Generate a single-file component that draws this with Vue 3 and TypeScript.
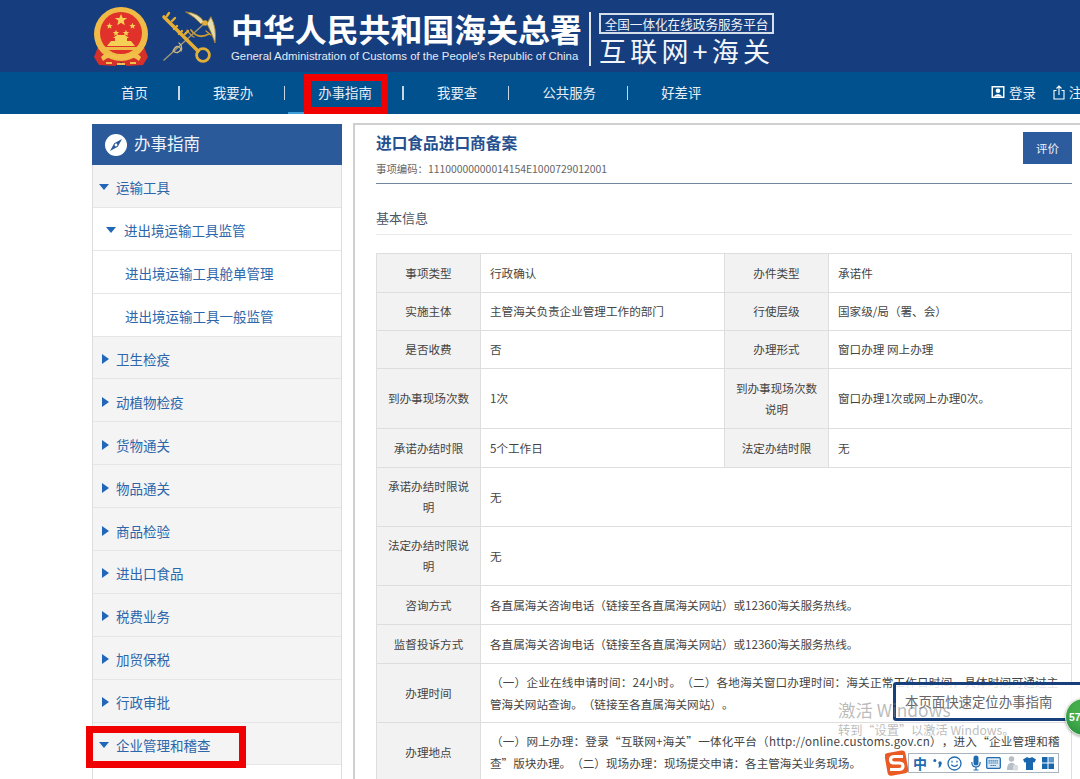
<script setup lang="ts">
interface NavItem { label: string; active?: boolean }
interface SideItem { label: string; level: number; open?: boolean; arrow?: boolean; marked?: boolean }

const navItems: NavItem[] = [
  { label: '首页' },
  { label: '我要办' },
  { label: '办事指南', active: true },
  { label: '我要查' },
  { label: '公共服务' },
  { label: '好差评' }
]

const sideItems: SideItem[] = [
  { label: '运输工具', level: 0, open: true, arrow: true },
  { label: '进出境运输工具监管', level: 1, open: true, arrow: true },
  { label: '进出境运输工具舱单管理', level: 2 },
  { label: '进出境运输工具一般监管', level: 2 },
  { label: '卫生检疫', level: 0, arrow: true },
  { label: '动植物检疫', level: 0, arrow: true },
  { label: '货物通关', level: 0, arrow: true },
  { label: '物品通关', level: 0, arrow: true },
  { label: '商品检验', level: 0, arrow: true },
  { label: '进出口食品', level: 0, arrow: true },
  { label: '税费业务', level: 0, arrow: true },
  { label: '加贸保税', level: 0, arrow: true },
  { label: '行政审批', level: 0, arrow: true },
  { label: '企业管理和稽查', level: 0, open: true, arrow: true, marked: true }
]

const phone = '各直属海关咨询电话（链接至各直属海关网站）或12360海关服务热线。'
const star = 'M0 -3.200 L0.900 -1 L3.200 -1 L1.400 0.400 L2 2.700 L0 1.400 L-2 2.700 L-1.400 0.400 L-3.200 -1 L-0.900 -1 Z'
</script>

<template>
  <div class="page">
    <header class="masthead">
      <svg class="emblem" viewBox="0 0 56 60" width="56" height="60">
        <path d="M5 40 L1 50 L6 58 L22 59 L28 55 L34 59 L50 58 L55 50 L51 40 Z" fill="#d5302a" />
        <circle cx="28" cy="27" r="27" fill="#efba45" />
        <circle cx="28" cy="26" r="21" fill="#e0322a" />
        <path d="M8 50 Q14 43 22 48 Q26 50 28 47 Q30 50 34 48 Q42 43 48 50 L46 54 Q40 48 34 52 Q30 54 28 52 Q26 54 22 52 Q16 48 10 54 Z" fill="#f2c04a" />
        <path d="M24 56 H32 V58 H24 Z M13 55 H19 V57 H13 Z M37 55 H43 V57 H37 Z" fill="#f2c04a" />
        <g fill="#f6cf55">
          <path :d="star" transform="translate(28 13) scale(1.900)" />
          <path :d="star" transform="translate(16.500 19)" />
          <path :d="star" transform="translate(39.500 19)" />
          <path :d="star" transform="translate(23 26)" />
          <path :d="star" transform="translate(33 26)" />
        </g>
        <path d="M14 39 L18 34 H22 V31 L20 31 L24 28 H32 L36 31 L34 31 V34 H38 L42 39 Z" fill="#f6cf55" />
        <path d="M9 40 H47 V43 H9 Z" fill="#efba45" />
      </svg>
      <svg class="customs" viewBox="0 0 56 56" width="56" height="56">
        <g fill="none" stroke-linecap="round">
          <path d="M3 50 L44 13" stroke="#9a9678" stroke-width="1.500" />
          <path d="M30 20 Q37 30 48 24" stroke="#c99a33" stroke-width="1.800" />
          <path d="M26 20 Q30 26 33 27 M45 21 L50 25" stroke="#c99a33" stroke-width="1.300" />
          <path d="M25 2 Q38 3 43 12 L40 14 Q34 7 25 2 Z" fill="#e6dcae" stroke="#a8842c" stroke-width="0.900" />
          <path d="M50 7 Q56 18 54 33 Q50 21 46 14 Z" fill="#e6dcae" stroke="#a8842c" stroke-width="0.900" />
          <path d="M3 7 L37 41" stroke="#e2ae37" stroke-width="3.600" />
          <path d="M6 6 L8 3 M11 11 L14 8 M16 16 L13 19 M21 21 L18 24 M24 24 L27 21" stroke="#e2ae37" stroke-width="2.400" />
          <circle cx="42" cy="45" r="6.400" stroke="#e2ae37" stroke-width="2.800" />
          <circle cx="44" cy="13" r="2.700" fill="#e2ae37" />
          <path d="M12 41 Q16 33 20 39 Q17 45 12 41 Z M18 33 Q22 36 20 41" stroke="#cdb67e" stroke-width="1.300" />
        </g>
      </svg>
      <div class="brand">
        <div class="brand-cn">中华人民共和国海关总署</div>
        <div class="brand-en">General Administration of Customs of the People's Republic of China</div>
      </div>
      <span class="brand-rule"></span>
      <div class="platform">
        <div class="platform-tag">全国一体化在线政务服务平台</div>
        <div class="platform-name">互联网+海关</div>
      </div>
    </header>

    <nav class="nav">
      <template v-for="(item, i) in navItems" :key="item.label">
        <span v-if="i > 0" class="nav-sep"></span>
        <a class="nav-item" :class="{ active: item.active }">
          {{ item.label }}
          <i v-if="item.active" class="nav-under"></i>
          <i v-if="item.active" class="nav-mark"></i>
        </a>
      </template>
      <div class="nav-user">
        <svg width="14" height="14" viewBox="0 0 14 14">
          <rect x="0.500" y="1" width="13" height="12" fill="#fff" />
          <rect x="2" y="2.500" width="10" height="9" fill="#01518f" />
          <circle cx="7" cy="5.800" r="2.300" fill="#fff" />
          <path d="M2.500 11.500 Q7 6.500 11.500 11.500 Z" fill="#fff" />
        </svg>
        <span class="user-login">登录</span>
        <svg width="12" height="15" viewBox="0 0 12 15" fill="none" stroke="#fff" stroke-width="1.100">
          <path d="M3.500 5.500 H1 V14 H11 V5.500 H8.500" />
          <path d="M6 10 V1 M3.500 3.500 L6 1 L8.500 3.500" />
        </svg>
        <span class="user-reg">注册</span>
      </div>
    </nav>

    <main class="body">
      <aside class="side">
        <div class="side-head">
          <svg width="22" height="22" viewBox="0 0 22 22">
            <circle cx="11" cy="11" r="11" fill="#fff" />
            <path d="M17 5 L12.800 12.800 L5 17 L9.200 9.200 Z" fill="#2b5a9a" />
            <circle cx="11" cy="11" r="1.400" fill="#fff" />
          </svg>
          <span>办事指南</span>
        </div>
        <div
          v-for="item in sideItems"
          :key="item.label"
          class="side-row"
          :class="['lv' + item.level, { marked: item.marked }]"
        >
          <i v-if="item.arrow" :class="item.open ? 'arrow-down' : 'arrow-right'"></i>
          <span>{{ item.label }}</span>
        </div>
      </aside>

      <section class="panel">
        <div class="panel-head">
          <div>
            <h1 class="title">进口食品进口商备案</h1>
            <p class="code">事项编码：11100000000014154E1000729012001</p>
          </div>
          <button class="rate">评价</button>
        </div>
        <h2 class="section">基本信息</h2>

        <table class="info">
          <colgroup>
            <col class="c1" />
            <col class="c2" />
            <col class="c3" />
            <col class="c4" />
          </colgroup>
          <tbody>
            <tr class="h39"><th>事项类型</th><td>行政确认</td><th>办件类型</th><td>承诺件</td></tr>
            <tr class="h38"><th>实施主体</th><td>主管海关负责企业管理工作的部门</td><th>行使层级</th><td>国家级/局（署、会）</td></tr>
            <tr class="h38"><th>是否收费</th><td>否</td><th>办理形式</th><td>窗口办理 网上办理</td></tr>
            <tr class="h60"><th>到办事现场次数</th><td>1次</td><th>到办事现场次数说明</th><td>窗口办理1次或网上办理0次。</td></tr>
            <tr class="h39"><th>承诺办结时限</th><td>5个工作日</td><th>法定办结时限</th><td>无</td></tr>
            <tr class="h59"><th>承诺办结时限说明</th><td colspan="3">无</td></tr>
            <tr class="h59"><th>法定办结时限说明</th><td colspan="3">无</td></tr>
            <tr class="h39"><th>咨询方式</th><td colspan="3">{{ phone }}</td></tr>
            <tr class="h39"><th>监督投诉方式</th><td colspan="3">{{ phone }}</td></tr>
            <tr class="h59">
              <th>办理时间</th>
              <td colspan="3" class="para">
                <span class="indent">（一）企业在线申请时间：24小时。（二）各地海关窗口办理时间：海关正常工作日时间，具体时间可通过主</span><br />管海关网站查询。（链接至各直属海关网站）。
              </td>
            </tr>
            <tr class="h59">
              <th>办理地点</th>
              <td colspan="3" class="para">
                <span class="indent">（一）网上办理：登录“互联网+海关”一体化平台（http://online.customs.gov.cn），进入“企业管理和稽</span><br />查”版块办理。（二）现场办理：现场提交申请：各主管海关业务现场。
              </td>
            </tr>
          </tbody>
        </table>
      </section>
    </main>

    <div class="locator">本页面快速定位办事指南</div>
    <div class="watermark">
      <div class="wm-1">激活 Windows</div>
      <div class="wm-2">转到“设置”以激活 Windows。</div>
    </div>
    <div class="ball">57</div>

    <div class="ime">
      <svg class="ime-s" width="24" height="26" viewBox="0 0 24 26">
        <rect x="1" y="1.500" width="21" height="23" rx="3.500" fill="#ea5a24" transform="rotate(-10 12 13)" />
        <path d="M18 6.500 H9.500 Q5.500 6.500 5.500 10 Q5.500 13 9.500 13 H14 Q18 13 18 16 Q18 19.500 14 19.500 H5" fill="none" stroke="#fff" stroke-width="3.200" />
      </svg>
      <div class="ime-bar">
        <span class="ime-zh">中</span>
        <svg width="9" height="11" viewBox="0 0 9 11" fill="#1f6bb0">
          <circle cx="1.800" cy="2.500" r="1.500" />
          <circle cx="7" cy="5" r="1.700" />
          <path d="M5.500 10 Q8.500 9 8.600 5 L6 6 Z" />
        </svg>
        <svg width="15" height="15" viewBox="0 0 15 15" fill="none" stroke="#1f6bb0" stroke-width="1.300">
          <circle cx="7.500" cy="7.500" r="6.500" />
          <path d="M4.200 8.800 Q7.500 12 10.800 8.800" />
          <path d="M5 4.800 V6.500 M10 4.800 V6.500" />
        </svg>
        <svg class="ime-mic" width="10" height="16" viewBox="0 0 10 16">
          <rect x="2.500" y="0.500" width="5" height="10" rx="2.500" fill="#1f6bb0" />
          <path d="M0.800 7 Q0.800 12 5 12 Q9.200 12 9.200 7 M5 12 V15 M2.500 15 H7.500" fill="none" stroke="#1f6bb0" stroke-width="1.200" />
        </svg>
        <svg width="15" height="12" viewBox="0 0 15 12">
          <rect x="0.700" y="0.700" width="13.600" height="10.600" rx="1" fill="#dbe8f4" stroke="#1f6bb0" stroke-width="1.300" />
          <path d="M2.500 3.800 H12.500 M2.500 6 H12.500 M4.500 8.500 H10.500" stroke="#1f6bb0" stroke-width="1.200" stroke-dasharray="1.300 .7" />
        </svg>
        <svg width="11" height="15" viewBox="0 0 11 15" fill="#b6bfc8">
          <circle cx="4.500" cy="3" r="2.800" />
          <path d="M0 14 Q0 6.800 4.500 6.800 Q9 6.800 9 14 Z" />
          <rect x="6" y="9" width="5" height="5.500" rx="1" fill="#d8dde2" />
        </svg>
        <svg width="13" height="13" viewBox="0 0 13 13" fill="#1867ad">
          <path d="M4 0 Q6.500 2 9 0 L13 2.500 L11.300 5.800 L10 5 V13 H3 V5 L1.700 5.800 L0 2.500 Z" />
        </svg>
        <svg width="12" height="12" viewBox="0 0 12 12" fill="#1867ad">
          <rect width="5.500" height="5.500" />
          <rect x="6.500" width="5.500" height="5.500" fill="#5d97c9" />
          <rect y="6.500" width="5.500" height="5.500" />
          <rect x="6.500" y="6.500" width="5.500" height="5.500" />
        </svg>
      </div>
    </div>
  </div>
</template>

<style>
html, body { margin: 0; overflow: hidden; background: #fff; }
</style>

<style scoped>
.page {
  position: relative;
  width: 1080px;
  height: 779px;
  overflow: hidden;
  background: #fff;
  font-family: "Noto Sans CJK SC", "Liberation Sans", sans-serif;
  color: #444;
}
.masthead {
  display: flex;
  align-items: flex-start;
  height: 72px;
  padding-left: 93px;
  box-sizing: border-box;
  background: #163d7e;
}
.emblem { margin: 7px 0 0 0; flex: none; }
.customs { margin: 10px 0 0 12px; flex: none; }
.brand { margin: 8px 0 0 14px; width: 356px; flex: none; }
.brand-cn {
  font-size: 31.900px;
  line-height: 40px;
  font-weight: 700;
  color: #fff;
  white-space: nowrap;
}
.brand-en {
  font-family: "Liberation Sans", sans-serif;
  margin-top: 2px;
  font-size: 11.400px;
  line-height: 13px;
  color: #e5ebf4;
  white-space: nowrap;
}
.brand-rule { width: 2px; height: 54px; margin: 12px 0 0 2px; background: #dfe6f0; flex: none; }
.platform { margin: 13px 0 0 8px; flex: none; }
.platform-tag {
  box-sizing: border-box;
  width: 175px;
  height: 21px;
  border: 2px solid #d5deeb;
  font-size: 12.600px;
  line-height: 17px;
  text-align: center;
  color: #eef2f8;
  white-space: nowrap;
}
.platform-name {
  margin-top: 2px;
  font-size: 27px;
  line-height: 30px;
  font-weight: 400;
  letter-spacing: 4.200px;
  color: #f2f5fa;
  white-space: nowrap;
}

.nav {
  display: flex;
  align-items: center;
  height: 42px;
  padding-left: 121px;
  background: #01518f;
  color: #e8eef5;
  font-size: 13.400px;
  position: relative;
}
.nav-sep { width: 1.500px; height: 14px; margin: 0 33.200px 0 30.500px; background: #c6d6e5; flex: none; }
.nav-item { position: relative; line-height: 40px; padding-bottom: 2px; white-space: nowrap; }
.nav-under {
  position: absolute;
  left: -30px;
  right: -16px;
  bottom: 0;
  height: 2px;
  background: #3f9fd8;
}
.nav-mark {
  position: absolute;
  left: -14px;
  right: -16px;
  top: 2px;
  bottom: 0;
  border: 7px solid #f00000;
}
.nav-user {
  position: absolute;
  left: 991px;
  top: 0;
  height: 40px;
  display: flex;
  align-items: center;
  white-space: nowrap;
}
.user-login { margin: 0 17px 0 4px; }
.user-reg { margin-left: 4px; }

.body {
  display: flex;
  align-items: flex-start;
  gap: 11px;
  padding: 10px 0 0 92px;
}
.side {
  position: relative;
  flex: none;
  width: 250px;
  height: 660px;
  box-sizing: border-box;
  border-left: 1px solid #ddd;
  border-right: 1px solid #ddd;
}
.side-head {
  display: flex;
  align-items: center;
  gap: 7px;
  height: 41px;
  box-sizing: border-box;
  margin: 0 -1px;
  padding: 0 0 0 13px;
  background: #2b5a9a;
  color: #eef3f9;
  font-size: 16.500px;
  line-height: 20px;
}
.side-head span { padding-bottom: 4px; }
.side-row {
  position: relative;
  display: flex;
  align-items: center;
  box-sizing: border-box;
  height: 42.900px;
  padding-top: 3px;
  border-bottom: 1px solid #e6e6e6;
  font-size: 13.500px;
  color: #2d66aa;
  white-space: nowrap;
}
.lv0 { background: #f4f4f4; padding-left: 6px; }
.lv1 { background: #fff; padding-left: 13px; }
.lv2 { background: #fff; padding-left: 32px; }
.arrow-down {
  width: 0;
  height: 0;
  border-left: 5.500px solid transparent;
  border-right: 5.500px solid transparent;
  border-top: 6px solid #2166b8;
}
.lv0 .arrow-down { margin-right: 7px; }
.lv1 .arrow-down { margin-right: 8px; }
.arrow-right {
  width: 0;
  height: 0;
  margin: 0 7px 0 3px;
  border-top: 5.500px solid transparent;
  border-bottom: 5.500px solid transparent;
  border-left: 7px solid #2166b8;
}
.marked::after {
  content: "";
  position: absolute;
  left: -7px;
  top: 3px;
  width: 160px;
  height: 42px;
  border: 7px solid #f00000;
  box-sizing: border-box;
}

.panel {
  flex: 1;
  min-width: 0;
  box-sizing: border-box;
  border-left: 2px solid #cfcfcf;
  border-top: 2px solid #cfcfcf;
  margin-top: -1px;
  padding: 9px 8px 0 21px;
  height: 700px;
}
.panel-head {
  display: flex;
  justify-content: space-between;
  align-items: flex-start;
  height: 49px;
  border-bottom: 1px solid #71879f;
}
.title {
  margin: -2px 0 0;
  font-size: 15.700px;
  line-height: 22px;
  font-weight: 700;
  color: #24508f;
}
.code {
  margin: 8px 0 0;
  font-size: 10.400px;
  line-height: 14px;
  color: #666;
  white-space: nowrap;
}
.rate {
  width: 49px;
  height: 32px;
  margin: -2px 0 0;
  border: 0;
  padding: 0;
  background: #2c5b9e;
  color: #eef3f9;
  font: inherit;
  font-size: 11.500px;
}
.section {
  margin: 0;
  padding: 24px 0 6px;
  font-size: 13px;
  line-height: 20px;
  font-weight: 400;
  color: #4a5565;
  border-bottom: 1px solid #ececec;
}
.info {
  margin-top: 18px;
  width: 695px;
  table-layout: fixed;
  border-collapse: collapse;
  font-size: 11.600px;
  line-height: 21px;
  color: #444;
  text-spacing-trim: space-all;
}
.c1 { width: 104px; }
.c2 { width: 244px; }
.c3 { width: 104px; }
.c4 { width: 243px; }
.info th, .info td { border: 1px solid #dedede; box-sizing: border-box; }
.info th {
  background: #f2f2f2;
  font-weight: 400;
  padding: 0 8px;
  text-align: center;
}
.info td { background: #fff; padding: 0 9px; }
.h38 { height: 38px; }
.h39 { height: 39px; }
.h59 { height: 59px; }
.h60 { height: 60px; }
.para { white-space: nowrap; line-height: 22px; }
.indent { padding-left: 1px; letter-spacing: 0.200px; }

.watermark {
  position: absolute;
  left: 838px;
  top: 698px;
  color: rgba(130, 130, 130, 0.55);
  white-space: nowrap;
}
.wm-1 { font-size: 17.400px; line-height: 24px; }
.wm-2 { font-size: 12.200px; line-height: 16px; }
.locator {
  position: absolute;
  left: 893px;
  top: 682px;
  width: 200px;
  height: 39px;
  box-sizing: border-box;
  padding-left: 9px;
  border: 3px solid #163f7c;
  border-radius: 3px;
  background: rgba(255, 255, 255, 0.85);
  font-size: 13.400px;
  line-height: 33px;
  color: #666;
  white-space: nowrap;
}
.ball {
  position: absolute;
  left: 1065px;
  top: 698px;
  width: 38px;
  height: 38px;
  box-sizing: border-box;
  border: 1px solid #e3efe0;
  border-radius: 50%;
  background: #45ad4c;
  box-shadow: inset 0 -5px 8px #2d9440, 0 1px 3px rgba(0, 0, 0, 0.35);
  color: #fff;
  font-family: "Liberation Sans", sans-serif;
  font-size: 10.500px;
  font-weight: 700;
  line-height: 36px;
  padding-left: 3px;
}
.ime {
  position: absolute;
  left: 885px;
  top: 750px;
  display: flex;
  align-items: center;
}
.ime-s { flex: none; position: relative; z-index: 1; }
.ime-bar {
  display: flex;
  align-items: center;
  justify-content: space-between;
  box-sizing: border-box;
  width: 151px;
  height: 20px;
  margin-left: -1px;
  padding: 0 4px 0 4px;
  border: 1px solid #a9b4bf;
  background: #fff;
}
.ime-zh { font-size: 14px; font-weight: 700; color: #1f6bb0; line-height: 18px; }
.ime-mic { margin-left: 3px; }
</style>
